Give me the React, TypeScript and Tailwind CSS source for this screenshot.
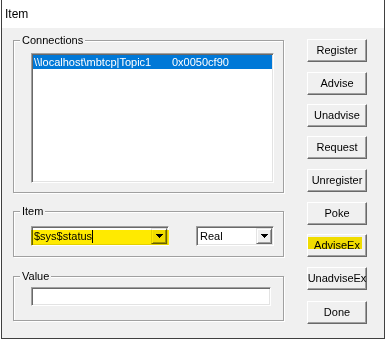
import React from 'react';

const buttons = [
    { label: 'Register', cls: 'mt-0' },
    { label: 'Advise', cls: 'mt-[10px]' },
    { label: 'Unadvise', cls: 'mt-[9px]' },
    { label: 'Request', cls: 'mt-[9px]' },
    { label: 'Unregister', cls: 'mt-[10px]' },
    { label: 'Poke', cls: 'mt-[10px]' },
    { label: 'AdviseEx', cls: 'mt-[9px]' },
    { label: 'UnadviseEx', cls: 'mt-[10px]' },
    { label: 'Done', cls: 'mt-[11px]' },
];

function Arrow() {
    return (
        <svg width="7" height="4" viewBox="0 0 7 4" shapeRendering="crispEdges">
            <rect x="0" y="0" width="7" height="1" fill="#000" />
            <rect x="1" y="1" width="5" height="1" fill="#000" />
            <rect x="2" y="2" width="3" height="1" fill="#000" />
            <rect x="3" y="3" width="1" height="1" fill="#000" />
        </svg>
    );
}

function DropBtn() {
    return (
        <div className="w-[16px] h-full flex items-center justify-center bg-[#f0f0f0] border border-t-[#e3e3e3] border-l-[#e3e3e3] border-b-[#696969] border-r-[#696969] shadow-[inset_1px_1px_0_#fff,inset_-1px_-1px_0_#a0a0a0]">
            <Arrow />
        </div>
    );
}

// sunken 3D edit/list frame
const sunken =
    'border border-t-[#a0a0a0] border-l-[#a0a0a0] border-b-white border-r-white shadow-[inset_1px_1px_0_#696969,inset_-1px_-1px_0_#e3e3e3] bg-white';

function Group({ label, className, children }: { label: string; className: string; children: React.ReactNode }) {
    return (
        <div className={`relative w-[271px] border border-[#a0a0a0] shadow-[inset_1px_1px_0_#fff,1px_1px_0_#fff] ${className}`}>
            <span className="absolute left-[6px] top-[-8px] px-[2px] bg-[#f0f0f0] leading-[14px]">{label}</span>
            {children}
        </div>
    );
}

export default function App() {
    return (
        <div
            className="relative w-[385px] h-[339px] bg-white text-[11px] text-black"
            style={{ fontFamily: '"Liberation Sans", Arial, sans-serif' }}
        >
            <div className="ml-[1px] w-[384px] h-[339px] flex flex-col border-l border-r border-b border-[#404040]">
                {/* Title */}
                <div className="h-[28px] bg-white pl-[3px] pt-[6px] text-[12px] leading-[16px]">Item</div>

                {/* Body */}
                <div className="flex-1 flex bg-[#f0f0f0]">
                    <div className="w-[282px] pl-[11px] pt-[12px] flex flex-col">
                        <Group label="Connections" className="h-[153px] pl-[17px] pt-[12px]">
                            <div className={`w-[243px] h-[130px] p-[1px] ${sunken}`}>
                                <div className="h-[14px] bg-[#0078d7] text-white flex leading-[14px] pl-[1px]">
                                    <span className="w-[138px]">\\localhost\mbtcp|Topic1</span>
                                    <span>0x0050cf90</span>
                                </div>
                            </div>
                        </Group>

                        <Group label="Item" className="mt-[18px] h-[46px] pl-[17px] pt-[14px] flex items-start">
                            <div className={`w-[138px] h-[20px] p-[1px] flex ${sunken}`}>
                                <div className="flex-1 flex items-center pl-[1px] leading-[16px]">
                                    <span>$sys$status</span>
                                    <span className="w-[1px] h-[13px] bg-black" />
                                </div>
                                <DropBtn />
                            </div>
                            <div className={`ml-[27px] w-[78px] h-[20px] p-[1px] flex ${sunken}`}>
                                <div className="flex-1 flex items-center pl-[2px] leading-[16px]">Real</div>
                                <DropBtn />
                            </div>
                        </Group>

                        <Group label="Value" className="mt-[19px] h-[45px] pl-[17px] pt-[10px]">
                            <div className={`w-[240px] h-[19px] ${sunken}`} />
                        </Group>
                    </div>

                    <div className="ml-[23px] pt-[11px] flex flex-col">
                        {buttons.map(b => (
                            <div
                                key={b.label}
                                className={`w-[60px] h-[23px] flex items-center justify-center bg-[#f0f0f0] border border-t-white border-l-white border-b-[#696969] border-r-[#696969] shadow-[inset_-1px_-1px_0_#a0a0a0] whitespace-nowrap ${b.cls}`}
                            >
                                {b.label}
                            </div>
                        ))}
                    </div>
                </div>
            </div>

            {/* highlighter marks */}
            <div className="absolute left-[31px] top-[230px] w-[138px] h-[15px] bg-[#ffea00] mix-blend-multiply" />
            <div className="absolute left-[308px] top-[237px] w-[54px] h-[12px] bg-[#ffea00] mix-blend-multiply" />
        </div>
    );
}
